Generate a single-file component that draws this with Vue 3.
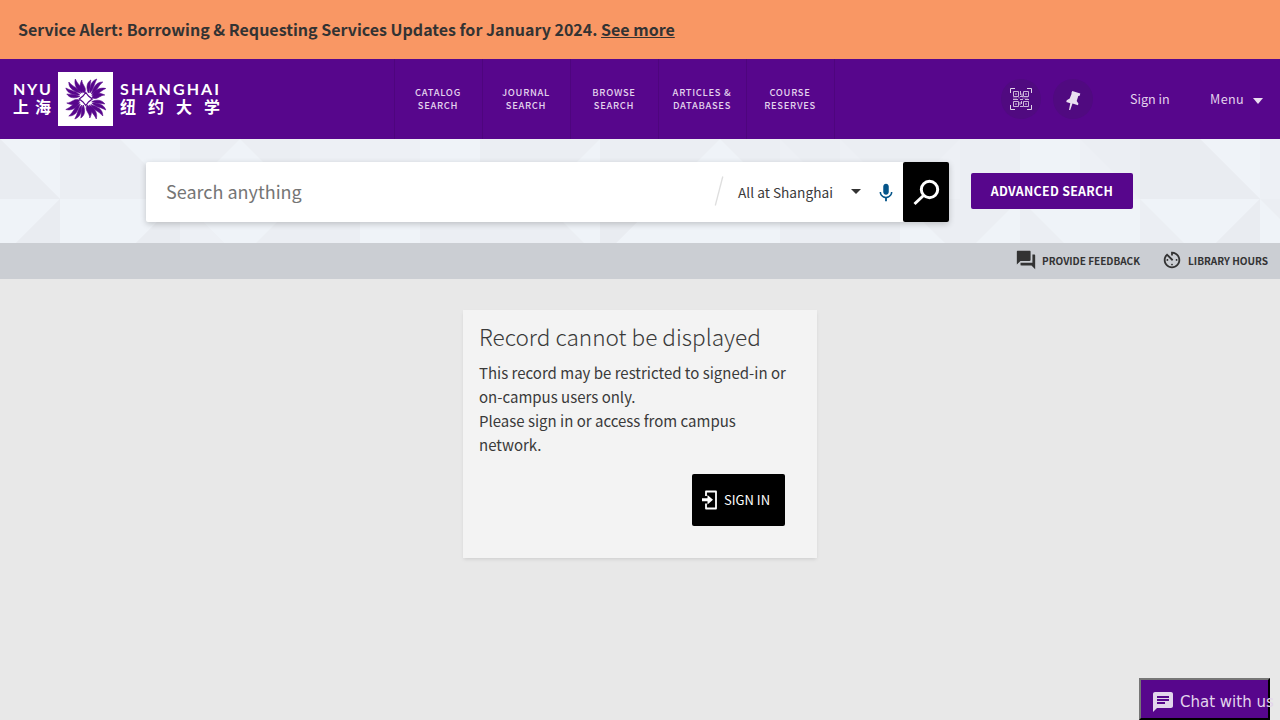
<script setup>
const navItems = [
  ['CATALOG', 'SEARCH'],
  ['JOURNAL', 'SEARCH'],
  ['BROWSE', 'SEARCH'],
  ['ARTICLES &', 'DATABASES'],
  ['COURSE', 'RESERVES'],
]
const quarters = [0, 90, 180, 270]
const lightTriangles = [
  '0,0 60,0 60,60', '0,60 60,60 16,104 0,104', '120,0 180,0 180,60',
  '60,60 180,60 136,104 60,104', '240,0 300,60 180,60', '180,60 300,60 256,104 224,104',
  '420,0 480,0 480,60 420,60', '360,60 420,60 420,104 360,104', '600,0 600,60 540,60',
  '540,60 600,60 600,104 584,104', '720,0 780,60 660,60', '660,60 780,60 780,104 616,104',
  '900,60 945,104 900,104', '1020,60 1020,104 976,104', '1020,0 1080,0 1080,60 1020,60',
  '1020,60 1140,60 1140,104 1064,104', '1200,0 1260,0 1260,60',
  '1140,60 1260,60 1216,104 1184,104', '1260,60 1280,80 1280,104 1260,104',
]
const midTriangles = [
  '180,60 224,104 180,104', '300,0 420,0 420,60 300,60', '780,0 840,60 780,60',
  '840,0 900,60 840,60', '960,0 960,60 900,60', '1080,0 1140,60 1080,60',
  '1260,0 1280,0 1280,60 1260,60',
]
const darkTriangles = ['60,60 60,104 16,104', '180,60 180,104 136,104', '0,0 60,60 0,60', '600,60 660,60 616,104 600,104', '1140,0 1200,0 1260,60 1140,60', '1260,60 1260,104 1216,104']
</script>

<template>
  <div class="page">
    <div class="alert"><span>Service Alert: Borrowing &amp; Requesting Services Updates for January 2024. <a>See more</a></span></div>

    <header class="topbar">
      <div class="logo">
        <div class="logo-text left"><span class="en">NYU</span><span class="zh">上海</span></div>
        <svg class="emblem" width="55" height="54" viewBox="0 0 55 54">
          <rect width="55" height="54" fill="#fff" />
          <g v-for="a in quarters" :key="a" :transform="`translate(27.8 27) rotate(${a})`" fill="#57068c" stroke="#57068c" stroke-width=".6" stroke-linejoin="round">
            <path d="M-1.500-6C-6-9-7-13-4-19C-4-14 2-11-1.500-6Z" />
            <path d="M-3.500-6C-9-9-12-14-10.500-20C-8-14-3-12-3.500-6Z" />
            <path d="M-5-5.500C-12-8-17-10-17-17C-13-12-7-11-5-5.500Z" />
            <path d="M-6-4C-12-4-18-5-20-11C-15-8-9-8-6-4Z" />
            <path d="M-6-2.500C-11-.5-16-.5-19-5C-14-4-10-5-6-2.500Z" />
          </g>
          <path d="M27.800 20.500L30.500 24L34.300 27L30.500 30L27.800 33.500L25 30L21.300 27L25 24Z" fill="#fff" stroke="#57068c" stroke-width="1.200" />
        </svg>
        <div class="logo-text right"><span class="en">SHANGHAI</span><span class="zh">纽约大学</span></div>
      </div>
      <nav class="nav">
        <div v-for="item in navItems" :key="item[0]" class="nav-item"><span>{{ item[0] }}</span><span>{{ item[1] }}</span></div>
      </nav>
      <div class="user">
        <div class="round">
          <svg width="22" height="22" viewBox="0 0 22 22" fill="none" stroke="#e2d5ea">
            <path d="M.5 5V.5H5M17 .5h4.500V5M21.500 17v4.500H17M5 21.500H.5V17" />
            <g opacity=".85">
              <path d="M3.500 3.500h5v5h-5zM13.500 3.500h5v5h-5zM3.500 13.500h5v5h-5zM13.500 13.500h5v5h-5z" />
              <path d="M5 6h2M15 6h2M5 16h2M15 16h2M10.500 3v4M12 5.500v3M10 8.500h3M3 11.500h5M10 11.500h3M15 11.500h4M11.500 13v3M10 18.500h3M10 14v3" />
            </g>
            <path d="M3 10h4M8 9.800h2M12 10h6M11 14.500h1" opacity=".45" />
          </svg>
        </div>
        <div class="round">
          <svg width="40" height="40" viewBox="0 0 40 40" fill="#e9dff0">
            <path d="M19.300 12L27.300 14.400L26.700 16.700L25.300 17L23.700 22L25.400 24.500L25 26.200L19.500 24.600L17.200 31H16L17.300 24.200L13.300 23L13.700 21.300L16.700 19.500L18.600 14.700L18.400 14Z" />
          </svg>
        </div>
        <span class="signin-link">Sign in</span>
        <span class="menu">Menu</span>
        <i class="caret"></i>
      </div>
    </header>

    <section class="search">
      <svg class="pattern" width="1280" height="104" viewBox="0 0 1280 104">
        <rect width="1280" height="104" fill="#ebeef3" />
        <polygon v-for="p in lightTriangles" :key="p" :points="p" fill="#eff3f8" />
        <polygon v-for="p in midTriangles" :key="p" :points="p" fill="#edf0f5" />
        <polygon v-for="p in darkTriangles" :key="p" :points="p" fill="#e9ecf1" />
      </svg>
      <div class="searchbox">
        <span class="placeholder">Search anything</span>
        <svg class="slash" width="10" height="30" viewBox="0 0 10 30"><path d="M1.300 29.500L8.800 .5" stroke="#dedede" stroke-width="1.300" /></svg>
        <span class="scope">All at Shanghai</span>
        <i class="caret dark"></i>
        <svg class="mic" width="22" height="22" viewBox="0 0 24 24" fill="#045489"><path d="M12 14c1.660 0 3-1.340 3-3V5c0-1.660-1.340-3-3-3S9 3.340 9 5v6c0 1.660 1.340 3 3 3zM17.300 11c0 3-2.540 5.100-5.300 5.100S6.700 14 6.700 11H5c0 3.410 2.720 6.230 6 6.720V21h2v-3.280c3.280-.48 6-3.300 6-6.720z" /></svg>
        <button class="go"><svg width="46" height="60" viewBox="0 0 46 60" fill="none" stroke="#fff" stroke-width="3"><circle cx="26.500" cy="27.500" r="8.200" /><path d="M20.500 33.500L11.500 42" /></svg></button>
      </div>
      <button class="advanced"><span>ADVANCED SEARCH</span></button>
    </section>

    <div class="subbar">
      <div class="sub-item">
        <svg width="22" height="22" viewBox="0 0 24 24" fill="#333"><path d="M21 6h-2v9H6v2c0 .55.45 1 1 1h11l4 4V7c0-.55-.45-1-1-1zm-4 6V3c0-.55-.45-1-1-1H3c-.55 0-1 .45-1 1v14l4-4h10c.55 0 1-.45 1-1z" /></svg>
        <span class="feedback">PROVIDE FEEDBACK</span>
      </div>
      <div class="sub-item">
        <svg width="22" height="22" viewBox="0 0 24 24" fill="#333"><path d="M11 17c0 .55.45 1 1 1s1-.45 1-1-.45-1-1-1-1 .45-1 1zm0-14v4h2V5.080c3.390.49 6 3.390 6 6.920 0 3.870-3.130 7-7 7s-7-3.130-7-7c0-1.680.59-3.220 1.580-4.420L12 13l1.410-1.410-6.800-6.800v.02C4.420 6.450 3 9.050 3 12c0 4.970 4.020 9 9 9 4.970 0 9-4.030 9-9s-4.030-9-9-9h-1zm7 9c0-.55-.45-1-1-1s-1 .45-1 1 .45 1 1 1 1-.45 1-1zM6 12c0 .55.45 1 1 1s1-.45 1-1-.45-1-1-1-1 .45-1 1z" /></svg>
        <span class="hours">LIBRARY HOURS</span>
      </div>
    </div>

    <main class="card">
      <h2>Record cannot be displayed</h2>
      <p><span>This record may be restricted to signed-in or</span><br />on-campus users only.<br />Please sign in or access from campus<br />network.</p>
      <button class="signin">
        <svg width="16" height="20" viewBox="0 0 16 20"><path d="M4 6V1.500H14V18.500H4V13.500" fill="none" stroke="#fff" stroke-width="1.800" stroke-linejoin="round" /><path d="M0 8.200h5.500V5L11 9.800L5.500 14.500v-3.200H0z" fill="#fff" /></svg>
        <span>SIGN IN</span>
      </button>
    </main>

    <button class="chat">
      <svg width="24" height="24" viewBox="0 0 24 24" fill="#e3d5ec"><path d="M20 2H4c-1.100 0-1.990.9-1.990 2L2 22l4-4h14c1.100 0 2-.9 2-2V4c0-1.100-.9-2-2-2zM6 9h12v2H6V9zm8 5H6v-2h8v2zm4-6H6V6h12v2z" /></svg>
      <span>Chat with us</span>
    </button>
  </div>
</template>

<style>
body { margin: 0; overflow: hidden; }
</style>
<style scoped>
.page { position: relative; width: 1280px; height: 720px; overflow: hidden; background: #e8e8e8; font-family: "Source Sans Pro", "Noto Sans CJK SC", sans-serif; color: #3a3a3a; }
button { font-family: inherit; border: 0; padding: 0; margin: 0; }
span { white-space: nowrap; }
.alert { height: 59px; box-sizing: border-box; padding: 0 18px; background: #f99764; font-size: 16.010px; font-weight: 700; line-height: 58px; color: #333; }
.alert a { text-decoration: underline; }
.topbar { height: 80px; background: #57068c; display: flex; position: relative; color: #e3d3ec; }
.logo { display: flex; width: 394px; padding: 13px 0 0 13px; box-sizing: border-box; color: #fff; }
.emblem { margin: 0 7px 0 6px; flex: none; }
.logo-text { display: flex; flex-direction: column; font-weight: 700; padding-top: 7px; }
.logo-text .en { font-family: Lato, sans-serif; font-size: 16px; line-height: 19px; height: 19px; }
.logo-text .zh { font-size: 16px; line-height: 17px; font-weight: 700; }
.left { width: 39px; }
.left .en { letter-spacing: 1.700px; }
.left .zh { letter-spacing: 6px; }
.right .en { letter-spacing: 2.100px; }
.right .zh { letter-spacing: 12px; }
.nav { display: flex; border-left: 1px solid #4e057e; height: 80px; }
.nav-item { width: 88px; box-sizing: border-box; border-right: 1px solid #4e057e; display: flex; flex-direction: column; align-items: center; padding: 27px 1px 0 0; font-size: 9.400px; font-weight: 500; letter-spacing: .7px; line-height: 13px; }
.user { display: flex; align-items: center; margin-left: 166px; }
.round { width: 40px; height: 40px; border-radius: 50%; background: #500a80; display: flex; align-items: center; justify-content: center; margin-right: 12px; }
.signin-link { margin-left: 25px; margin-top: -1px; font-size: 12.600px; width: 80px; }
.menu { margin-top: -1px; font-size: 12.600px; letter-spacing: .4px; width: 43px; }
.caret { border: 5px solid transparent; border-top: 6px solid #eadff0; border-bottom: 0; margin-top: 3px; }
.search { position: relative; height: 104px; display: flex; padding-left: 146px; box-sizing: border-box; }
.pattern { position: absolute; inset: 0; }
.searchbox { position: relative; width: 803px; height: 60px; margin-top: 23px; background: #fff; border-radius: 2px; box-shadow: 0 2px 6px rgba(0,0,0,.2); display: flex; align-items: center; }
.placeholder { margin-left: 20px; margin-top: -3px; width: 548px; font-size: 18px; color: #757575; }
.slash { margin-top: -2px; }
.scope { margin-left: 14px; width: 113px; font-size: 13.700px; color: #3a3a3a; }
.caret.dark { border-top: 5px solid #333; margin: -1px 0 0 0; }
.mic { margin: 1px 6px 0 14px; flex: none; }
.go { background: #000; width: 46px; height: 60px; border-radius: 2px; position: absolute; right: 0; top: 0; }
.advanced { position: relative; margin: 34px 0 0 22px; width: 162px; height: 36px; border-radius: 2px; background: #57068c; color: #fff; font-size: 12.400px; font-weight: 700; letter-spacing: .3px; line-height: 36px; }
.subbar { height: 36px; background: #cbced3; display: flex; justify-content: flex-end; padding-right: 12px; }
.sub-item { display: flex; align-items: center; gap: 5px; margin-left: 21px; font-size: 10px; font-weight: 700; color: #333; }
.sub-item span { margin-top: -2px; }
.hours { width: 80px; font-size: 10.080px; }
.sub-item svg { margin-top: -3px; }
.card { width: 354px; height: 248px; margin: 31px auto 0; background: #f3f3f3; box-shadow: 0 2px 4px -1px rgba(0,0,0,.13); padding: 11px 32px 0 16px; box-sizing: border-box; position: relative; display: flex; flex-direction: column; }
h2 { margin: 0; font-size: 22.600px; font-weight: 300; line-height: 32px; white-space: nowrap; }
p { margin: 8px 0 17px; font-size: 15px; line-height: 24px; height: 96px; white-space: nowrap; }
.signin { align-self: flex-end; flex: none; display: flex; align-items: center; width: 93px; height: 52px; background: #000; border-radius: 2px; color: #fff; font-size: 13px; }
.signin svg { margin: 0 6px 0 10px; }
.signin span { margin-top: -2px; }
.chat { position: absolute; left: 1139px; top: 678px; width: 131px; height: 42px; box-sizing: border-box; border: 2px outset #3b3b3b; border-color: #767676 #212121 #212121 #767676; background: #57068c; display: flex; align-items: center; color: #e3d5ec; font-family: "DejaVu Sans", sans-serif; font-size: 15px; padding-left: 10px; padding-top: 6px; }
.chat svg { flex: none; margin-right: 5px; }
</style>
